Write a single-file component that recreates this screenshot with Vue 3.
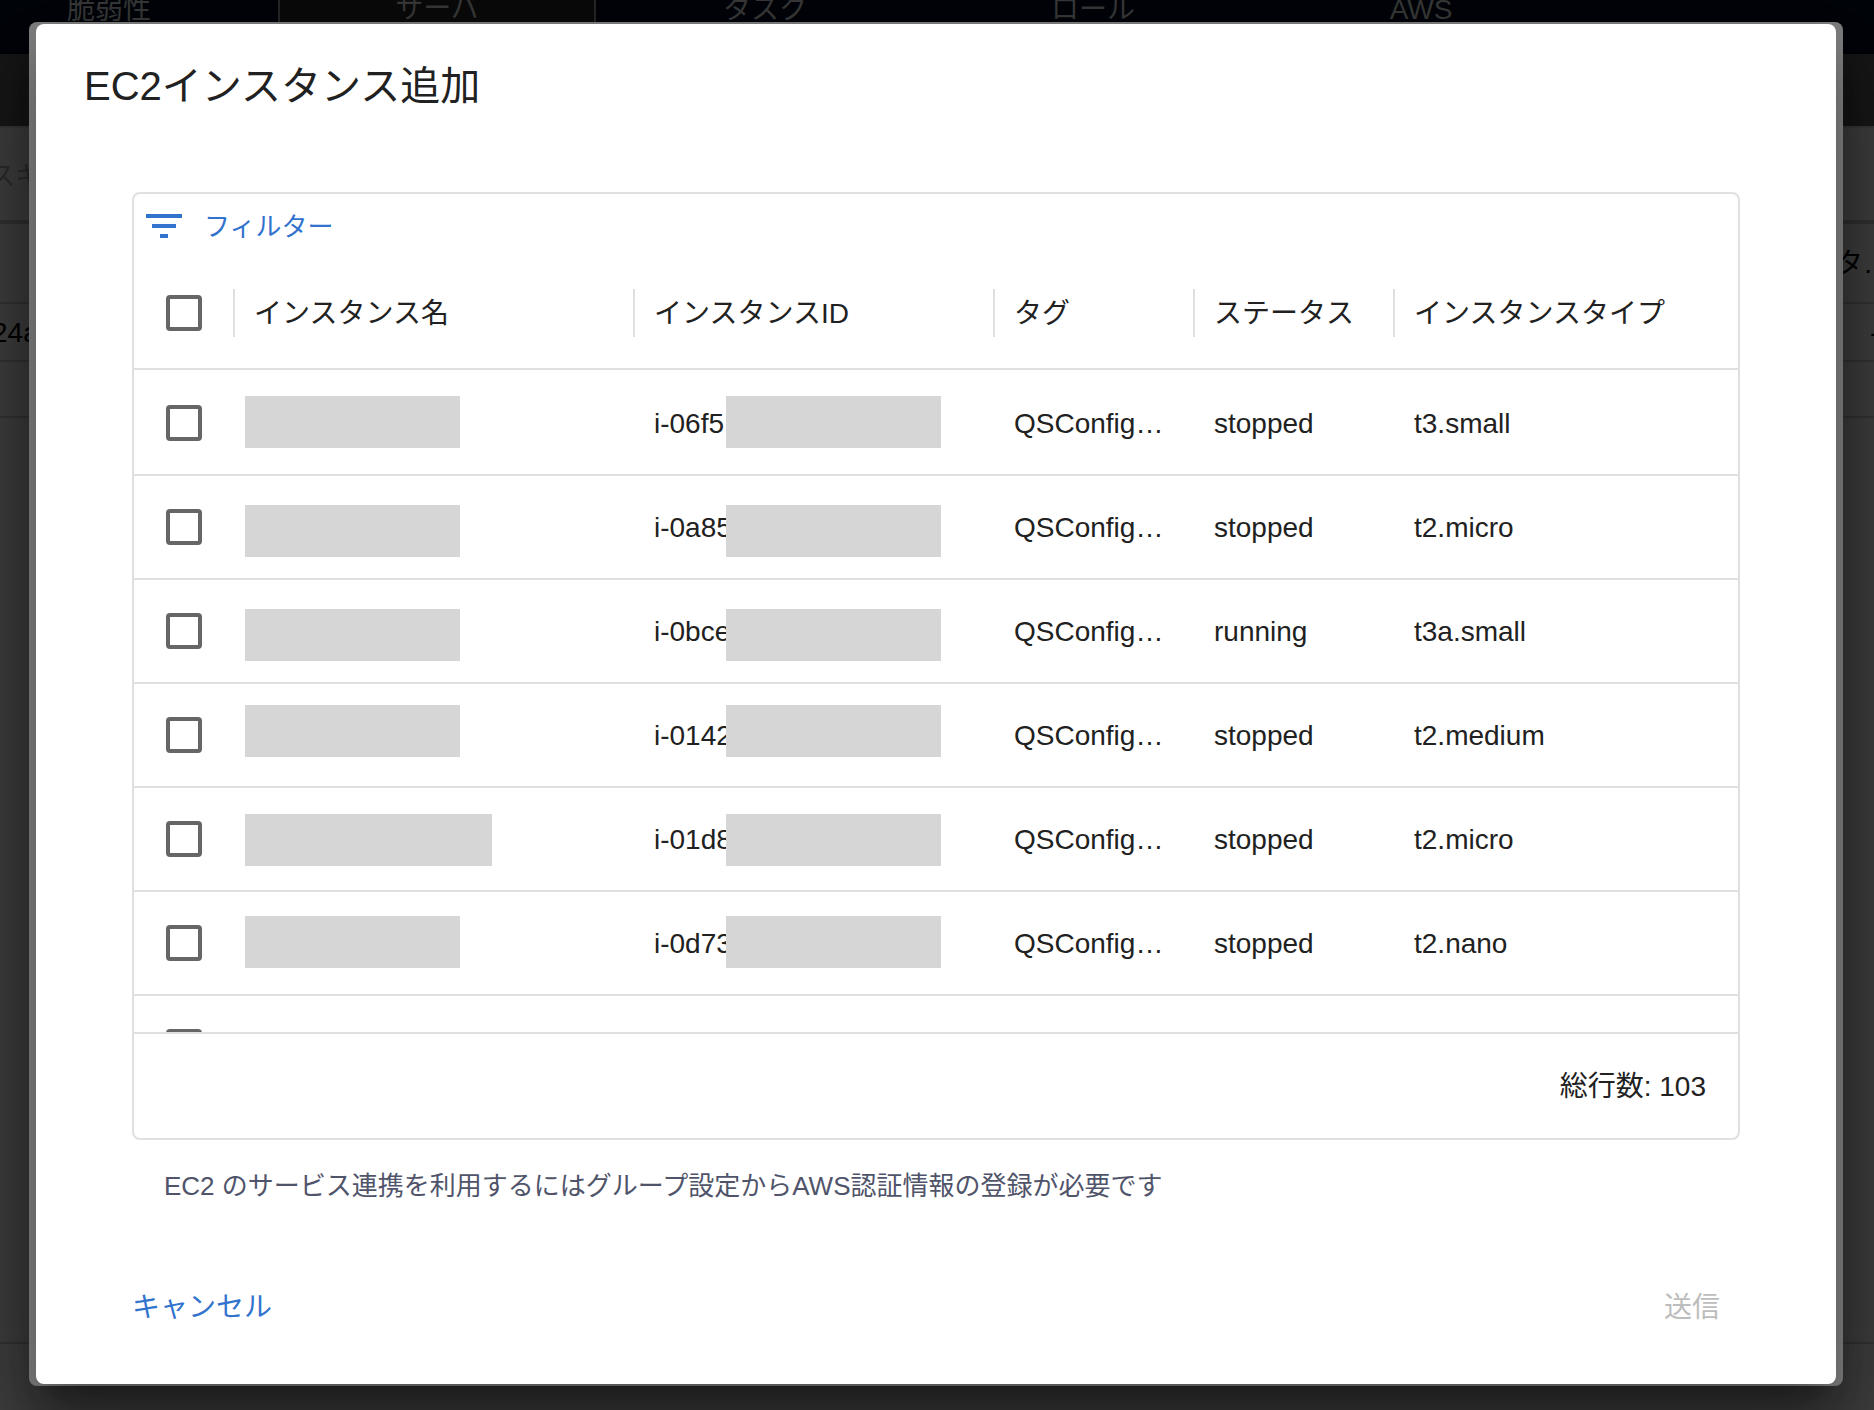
<script setup>
import { ref } from 'vue'

const tabs = [
  { label: '脆弱性' },
  { label: 'サーバ', active: true },
  { label: 'タスク' },
  { label: 'ロール' },
  { label: 'AWS' },
]

const columns = ['インスタンス名', 'インスタンスID', 'タグ', 'ステータス', 'インスタンスタイプ']

const rows = ref([
  { id: 'i-06f5', status: 'stopped', type: 't3.small', maskTop: 24, maskWidth: 215 },
  { id: 'i-0a85', status: 'stopped', type: 't2.micro', maskTop: 29, maskWidth: 215 },
  { id: 'i-0bce', status: 'running', type: 't3a.small', maskTop: 29, maskWidth: 215 },
  { id: 'i-0142', status: 'stopped', type: 't2.medium', maskTop: 21, maskWidth: 215 },
  { id: 'i-01d8', status: 'stopped', type: 't2.micro', maskTop: 26, maskWidth: 247 },
  { id: 'i-0d73', status: 'stopped', type: 't2.nano', maskTop: 24, maskWidth: 215 },
  { id: '', status: '', type: '', maskTop: 24, maskWidth: 0 },
])
</script>

<template>
  <div class="app">
    <div class="page" aria-hidden="true">
      <nav class="tabs">
        <span v-for="t in tabs" :key="t.label" class="tab" :class="{ active: t.active }">{{ t.label }}</span>
      </nav>
      <div class="subbar"></div>
      <div class="search"><span>スキ</span></div>
      <div class="line head"><span></span><span class="end">タ…</span></div>
      <div class="line item"><span class="start">24a</span><span class="dash">-</span></div>
      <div class="line blank"></div>
      <div class="line rest"></div>
      <div class="bottom"></div>
    </div>

    <div class="overlay">
      <div class="frame">
        <section class="dialog" role="dialog" aria-modal="true" aria-labelledby="dialog-title">
          <h2 id="dialog-title">EC2インスタンス追加</h2>

          <div class="grid">
            <div class="toolbar">
              <button type="button" class="filter">
                <svg width="48" height="48" viewBox="0 0 24 24" aria-hidden="true">
                  <path d="M10 18h4v-2h-4v2zM3 6v2h18V6H3zm3 7h12v-2H6v2z" fill="currentColor" />
                </svg>
                <span>フィルター</span>
              </button>
            </div>
            <div class="viewport">
              <table>
                <colgroup>
                  <col class="c-check" /><col class="c-name" /><col class="c-id" />
                  <col class="c-small" /><col class="c-small" /><col />
                </colgroup>
                <thead>
                  <tr>
                    <th class="check"><input type="checkbox" aria-label="すべて選択" /></th>
                    <th v-for="c in columns" :key="c" scope="col"><span>{{ c }}</span></th>
                  </tr>
                </thead>
                <tbody>
                  <tr v-for="(r, i) in rows" :key="i">
                    <td class="check"><input type="checkbox" :aria-label="'行 ' + (i + 1)" /></td>
                    <td><i v-if="r.id" class="mask" :style="{ top: r.maskTop + 'px', width: r.maskWidth + 'px' }"></i></td>
                    <td>{{ r.id }}<i v-if="r.id" class="mask id" :style="{ top: r.maskTop + 'px' }"></i></td>
                    <td>{{ r.id ? 'QSConfig…' : '' }}</td>
                    <td>{{ r.status }}</td>
                    <td>{{ r.type }}</td>
                  </tr>
                </tbody>
              </table>
            </div>
            <footer>総行数: 103</footer>
          </div>

          <p class="note">EC2 のサービス連携を利用するにはグループ設定からAWS認証情報の登録が必要です</p>

          <div class="actions">
            <button type="button" class="cancel">キャンセル</button>
            <button type="button" class="submit" disabled>送信</button>
          </div>
        </section>
      </div>
    </div>
  </div>
</template>

<style>
body {
  background: #404040;
}
</style>

<style scoped>
* {
  box-sizing: border-box;
}
.app {
  position: relative;
  min-height: 100vh;
  overflow: hidden;
  font-family: "Liberation Sans", "Noto Sans CJK JP", sans-serif;
  font-size: 28px;
  color: #212121;
}
button {
  font: inherit;
  background: none;
  border: 0;
  padding: 0;
  cursor: pointer;
}

/* dimmed page behind the dialog */
.page {
  position: absolute;
  inset: 0;
  display: flex;
  flex-direction: column;
  overflow: hidden;
  background: #404040;
  color: #000;
}
.tabs {
  flex: none;
  display: flex;
  gap: 10px;
  height: 54px;
  margin-left: -50px;
  background: #00060b;
  color: #3c3c3c;
}
.tab {
  flex: none;
  width: 318px;
  height: 54px;
  line-height: 20px;
  text-align: center;
}
.tab.active {
  line-height: 18px;
  background: #0c0c0c;
  border: solid #2a2a2a;
  border-width: 0 2px;
}
.subbar {
  flex: none;
  height: 72px;
  background: #181818;
}
.search {
  flex: none;
  height: 98px;
  margin-left: -11px;
  line-height: 96px;
  font-size: 26px;
  border-top: 2px solid #3a3a3a;
  border-bottom: 4px solid #333;
  color: #2d2d2d;
}
.line {
  flex: none;
  display: flex;
  justify-content: space-between;
  align-items: center;
  white-space: nowrap;
  border-bottom: 2px solid #353535;
}
.head {
  height: 80px;
  padding-bottom: 4px;
}
.end {
  width: 39px;
}
.item {
  height: 58px;
  padding-top: 2px;
}
.start {
  margin-left: -8px;
}
.dash {
  width: 4px;
}
.blank {
  height: 56px;
}
.rest {
  flex: 1;
}
.bottom {
  flex: none;
  height: 66px;
}

.overlay {
  position: relative;
  padding: 22px 31px 24px 29px;
}
.frame {
  padding: 2px 7px;
  border-radius: 8px;
  background: #808080;
  box-shadow: 0 22px 30px -14px rgba(0, 0, 0, 0.2), 0 48px 76px 6px rgba(0, 0, 0, 0.14),
    0 18px 92px 16px rgba(0, 0, 0, 0.12);
}
.dialog {
  padding: 30px 96px 52px;
  border-radius: 8px;
  background: #fff;
  box-shadow: 0 22px 30px -14px rgba(0, 0, 0, 0.2), 0 48px 76px 6px rgba(0, 0, 0, 0.14),
    0 18px 92px 16px rgba(0, 0, 0, 0.12);
}
h2 {
  margin: 0 0 74px -48px;
  font-size: 40px;
  font-weight: 400;
  line-height: 64px;
}

.grid {
  border: 2px solid #e0e0e0;
  border-radius: 8px;
}
.toolbar {
  display: flex;
  height: 64px;
  padding-left: 6px;
}
.filter {
  display: flex;
  align-items: center;
  gap: 16px;
  color: #3273ce;
  font-size: 26px;
}
.filter span {
  padding-bottom: 4px;
}
.viewport {
  height: 774px;
  overflow: hidden;
}
table {
  width: 100%;
  table-layout: fixed;
  border-collapse: separate;
  border-spacing: 0;
}
.c-check {
  width: 100px;
}
.c-name {
  width: 400px;
}
.c-id {
  width: 360px;
}
.c-small {
  width: 200px;
}
th {
  height: 112px;
  padding: 0;
  font-weight: 400;
  text-align: left;
  border-bottom: 2px solid #e0e0e0;
}
th span {
  display: block;
  height: 48px;
  margin-left: -1px;
  padding-left: 19px;
  line-height: 50px;
  border-left: 2px solid #e0e0e0;
  white-space: nowrap;
}
td {
  position: relative;
  height: 104px;
  padding: 2px 20px 0;
  border-bottom: 2px solid #e0e0e0;
  white-space: nowrap;
}
tbody tr:first-child td {
  height: 106px;
  border-top: 2px solid #fff;
}
.check {
  padding: 0 0 0 32px;
}
input {
  appearance: none;
  display: block;
  width: 36px;
  height: 36px;
  margin: 0;
  border: 4px solid #666;
  border-radius: 4px;
}
.mask {
  position: absolute;
  left: 11px;
  height: 52px;
  background: #d6d6d6;
}
.mask.id {
  left: 92px;
  width: 215px;
}
footer {
  height: 106px;
  padding-right: 32px;
  line-height: 106px;
  text-align: right;
  border-top: 2px solid #e0e0e0;
}
.note {
  margin: 26px 0 0 32px;
  font-size: 26px;
  line-height: 40px;
  color: #50546a;
}
.actions {
  display: flex;
  justify-content: space-between;
  margin-top: 78px;
  padding-right: 20px;
  line-height: 48px;
}
.cancel {
  color: #3273ce;
}
.submit {
  color: #bdbdbd;
  cursor: default;
}
</style>
